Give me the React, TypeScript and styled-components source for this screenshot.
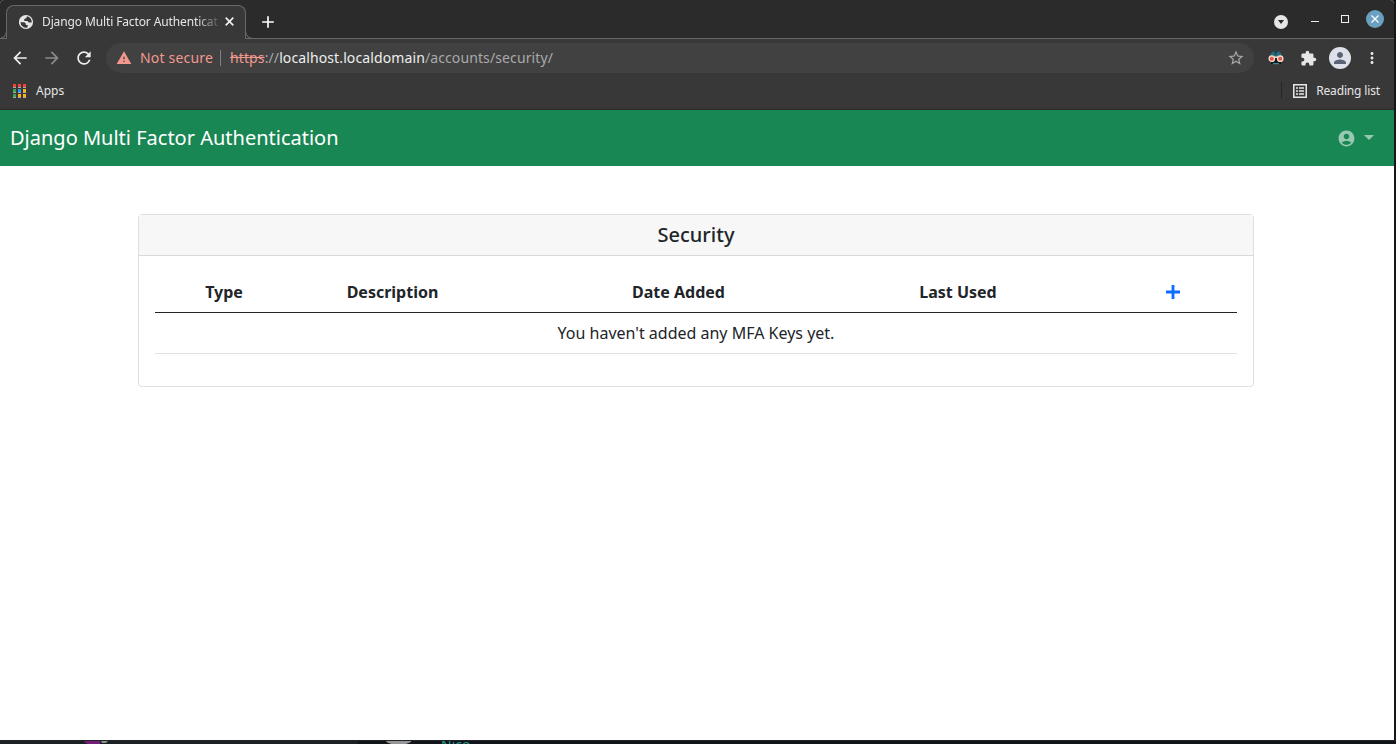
import React from "react";
import styled, { createGlobalStyle } from "styled-components";
import {
  MdArrowBack, MdArrowForward, MdRefresh, MdWarning, MdStarBorder, MdExtension,
  MdPerson, MdMoreVert, MdAccountCircle, MdAdd,
} from "react-icons/md";

const GlobalStyle = createGlobalStyle`
  *, *::before, *::after { box-sizing: border-box; }
  body { margin: 0; background: #0f1216; font-family: "Noto Sans", sans-serif; overflow: hidden; }
  svg { display: block; flex: none; }
`;

const Desktop = styled.div`
  width: 1396px;
  height: 744px;
  display: flex;
  flex-direction: column;
  background: #15181a;
  overflow: hidden;
`;

const Window = styled.div`
  width: 1394px;
  height: 740px;
  flex: none;
  display: flex;
  flex-direction: column;
  background: #fff;
  overflow: hidden;
  border-radius: 4px 4px 0 0;
`;

const TitleBar = styled.div`
  height: 39px;
  flex: none;
  display: flex;
  align-items: flex-end;
  background: #2b2b2b;
  border-bottom: 1px solid #686868;
`;

const Tab = styled.div`
  position: relative;
  width: 240px;
  height: 34px;
  margin: 0 0 -1px 6px;
  padding: 0 11px 2px 12px;
  display: flex;
  align-items: center;
  background: #383838;
  border: 1px solid #686868;
  border-bottom: 0;
  border-radius: 8px 8px 0 0;
  color: #e6e6e6;

  &::before, &::after {
    content: "";
    position: absolute;
    bottom: 0;
    width: 8px;
    height: 8px;
    border-bottom: 1px solid #686868;
  }
  &::before {
    left: -8px;
    border-right: 1px solid #686868;
    border-bottom-right-radius: 8px;
  }
  &::after {
    right: -8px;
    border-left: 1px solid #686868;
    border-bottom-left-radius: 8px;
  }
`;

const TabTitle = styled.div`
  flex: 1;
  margin: 0 7px 0 8px;
  font-size: 12px;
  line-height: 20px;
  letter-spacing: -0.12px;
  white-space: nowrap;
  overflow: hidden;
  mask-image: linear-gradient(to right, #000 154px, transparent 180px);
`;

const NewTab = styled.div`
  margin: 0 auto 6px 12px;
  color: #fff;
`;

const WindowButtons = styled.div`
  display: flex;
  align-items: center;
  height: 38px;
  padding-right: 10px;
`;

const TabSearch = styled.div`
  width: 14px;
  height: 14px;
  margin: 5px 23px 0 0;
  display: grid;
  place-items: center;
  border-radius: 50%;
  background: #e6e6e6;
`;

const Minimize = styled.div`
  width: 8px;
  height: 1px;
  margin: 5px 22px 0 0;
  background: #eee;
`;

const Maximize = styled.div`
  width: 8px;
  height: 8px;
  margin-right: 17px;
  border: 1px solid #eee;
`;

const CloseWindow = styled.div`
  width: 18px;
  height: 18px;
  display: grid;
  place-items: center;
  border-radius: 50%;
  background: #6aa0c0;
`;

const Toolbar = styled.div`
  height: 38px;
  flex: none;
  display: flex;
  align-items: center;
  padding: 0 13px 0 10px;
  background: #383838;
`;

const NavButtons = styled.div`
  display: flex;
  gap: 12px;
  color: #eee;
`;

const AddressBar = styled.div`
  width: 1148px;
  height: 30px;
  margin-left: 12px;
  padding: 0 9px 0 10px;
  display: flex;
  align-items: center;
  border-radius: 15px;
  background: #414141;
  font-size: 14px;
  line-height: 20px;
  color: #a9a9a9;
`;

const NotSecure = styled.span`
  margin-left: 8px;
  letter-spacing: 0.18px;
  color: #f2988f;
`;

const AddressDivider = styled.span`
  width: 1px;
  height: 16px;
  margin: 0 9px 0 7px;
  background: #808080;
`;

const Url = styled.span`
  flex: 1;
  letter-spacing: 0.11px;
  s { color: #f2988f; }
  b { font-weight: 400; color: #eee; }
`;

const Extensions = styled.div`
  display: flex;
  align-items: center;
  margin-left: auto;
  color: #e6e6e6;
`;

const ExtensionSlot = styled.div`
  margin-right: 16px;
`;

const Avatar = styled.div`
  width: 22px;
  height: 22px;
  margin: 0 12px;
  display: grid;
  place-items: center;
  border-radius: 50%;
  background: #dee1e9;
  color: #5b6378;
`;

const Bookmarks = styled.div`
  height: 33px;
  flex: none;
  display: flex;
  align-items: center;
  padding: 0 14px 5px 13px;
  background: #383838;
  border-bottom: 1px solid #2b2b2b;
  color: #e6e6e6;
  font-size: 12px;
`;

const AppsGrid = styled.div`
  display: grid;
  grid-template-columns: repeat(3, 3px);
  grid-auto-rows: 4px;
  gap: 1px 2px;
  margin-right: 10px;
`;

const AppDot = styled.i<{ $color: string }>`
  background: ${(p) => p.$color};
  border-bottom: 1px solid #aaa;
`;

const ReadingList = styled.div`
  display: flex;
  align-items: center;
  gap: 9px;
  height: 17px;
  margin-left: auto;
  padding-left: 11px;
  border-left: 1px solid #262626;
  letter-spacing: -0.15px;
`;

const Navbar = styled.header`
  height: 56px;
  flex: none;
  display: flex;
  align-items: center;
  justify-content: space-between;
  padding: 0 20px 0 10px;
  background: #198754;
`;

const Brand = styled.div`
  font-size: 20px;
  line-height: 30px;
  color: #fff;
`;

const UserMenu = styled.div`
  display: flex;
  align-items: center;
  gap: 8px;
  color: rgba(255, 255, 255, 0.55);
`;

const Caret = styled.span`
  border: 5px solid transparent;
  border-top: 5px solid currentColor;
  border-bottom: 0;
  margin-top: -1px;
`;

const Card = styled.section`
  width: 1116px;
  margin: 48px 0 0 138px;
  border: 1px solid #dfdfdf;
  border-radius: 4px;
  color: #212529;
`;

const CardHeader = styled.h5`
  height: 41px;
  margin: 0;
  padding-top: 8px;
  border-bottom: 1px solid #d8d8d8;
  background: #f7f7f7;
  text-align: center;
  font-size: 20px;
  font-weight: 500;
  line-height: 24px;
`;

const CardBody = styled.div`
  padding: 16px 16px 32px;
`;

const KeyTable = styled.table`
  width: 100%;
  table-layout: fixed;
  border-collapse: separate;
  border-spacing: 0;
  font-size: 16px;
  line-height: 24px;
  text-align: center;
`;

const HeadCell = styled.th<{ $width?: number }>`
  width: ${(p) => (p.$width ? `${p.$width}px` : "auto")};
  padding: 8px 0;
  border-bottom: 1px solid #212529;
`;

const AddCell = styled(HeadCell)`
  padding-left: 57px;
  color: #0d6efd;
  svg { margin: 0 auto; }
`;

const EmptyCell = styled.td`
  padding: 8px;
  border-bottom: 1px solid #dee2e6;
`;

const Backdrop = styled.div`
  height: 4px;
  flex: none;
  display: flex;
  background: #11151a;
  border-top: 1px solid #202427;
  overflow: hidden;
`;

const BackdropPanel = styled.div`
  width: 358px;
  height: 4px;
  padding-left: 84px;
  background: #1b2024;
`;

const BackdropName = styled.span`
  margin-left: 29px;
  margin-top: -4px;
  font-size: 14px;
  line-height: 16px;
  color: #269b91;
`;

const appColors = ["#f44336", "#f44336", "#f44336", "#34a853", "#2196f3", "#fbb117", "#34a853", "#fbb117", "#fbb117"];

export default function App() {
  return (
    <Desktop>
      <GlobalStyle />
      <Window>
        <TitleBar>
          <Tab>
            <svg width="15" height="16" viewBox="0 0 15 16">
              <circle cx="7" cy="8" r="7.1" fill="#e6e6e6" />
              <path d="M8 2.3l-.8 1.9-2 .8.2 2h3l1.5 1.5 2.8.1A5.7 5.7 0 0 0 8 2.3z" fill="#383838" />
              <path d="M1.4 8.2h3.9l1.5 1.4v1.5h2l-.4 2.4a5.8 5.8 0 0 1-7-5.3z" fill="#383838" />
            </svg>
            <TabTitle>Django Multi Factor Authentication</TabTitle>
            <svg width="9" height="9" viewBox="0 0 9 9"><path d="M.7.7l7.6 7.6m0-7.6L.7 8.3" stroke="#eee" strokeWidth="1.7" /></svg>
          </Tab>
          <NewTab><MdAdd size={20} /></NewTab>
          <WindowButtons>
            <TabSearch>
              <svg width="8" height="6" viewBox="0 0 8 6"><path d="M1 1h6L4 5z" fill="#2b2b2b" /></svg>
            </TabSearch>
            <Minimize />
            <Maximize />
            <CloseWindow>
              <svg width="8" height="8" viewBox="0 0 8 8"><path d="M.5.5l7 7m0-7l-7 7" stroke="#fff" strokeWidth="1.3" /></svg>
            </CloseWindow>
          </WindowButtons>
        </TitleBar>
        <Toolbar>
          <NavButtons>
            <MdArrowBack size={20} />
            <MdArrowForward size={20} color="#8b8b8b" />
            <MdRefresh size={20} />
          </NavButtons>
          <AddressBar>
            <MdWarning size={16} color="#f2988f" />
            <NotSecure>Not secure</NotSecure>
            <AddressDivider />
            <Url><s>https</s>://<b>localhost.localdomain</b>/accounts/security/</Url>
            <MdStarBorder size={18} />
          </AddressBar>
          <Extensions>
            <ExtensionSlot>
              <svg width="16" height="16" viewBox="0 0 16 16">
                <path d="M2 7Q2 1 8 1t6 6z" fill="#286c7c" />
                <path d="M6.5 1.2h3.5L7 5z" fill="#173e4b" />
                <path d="M3 8h10v6H3z" fill="#151819" />
                <path d="M5 13h6v1.3H5z" fill="#3b8795" />
                <circle cx="3.8" cy="8.7" r="2.7" fill="#d75c4b" stroke="#f5d7ca" strokeWidth="1.3" />
                <circle cx="12.2" cy="8.7" r="2.7" fill="#d75c4b" stroke="#f5d7ca" strokeWidth="1.3" />
                <path d="M6 7.2h4" stroke="#f5d7ca" strokeWidth="1.4" />
              </svg>
            </ExtensionSlot>
            <MdExtension size={17} />
            <Avatar><MdPerson size={18} /></Avatar>
            <MdMoreVert size={18} />
          </Extensions>
        </Toolbar>
        <Bookmarks>
          <AppsGrid>{appColors.map((c, i) => <AppDot key={i} $color={c} />)}</AppsGrid>
          Apps
          <ReadingList>
            <svg width="14" height="14" viewBox="0 0 14 14" fill="none" stroke="#e6e6e6">
              <path d="M.75.75h12.5v12.5H.75z" strokeWidth="1.5" />
              <path d="M3 4h2m1 0h5M3 7h2m1 0h5M3 10h2m1 0h5" strokeWidth="1.5" />
            </svg>
            Reading list
          </ReadingList>
        </Bookmarks>
        <Navbar>
          <Brand>Django Multi Factor Authentication</Brand>
          <UserMenu>
            <MdAccountCircle size={19} />
            <Caret />
          </UserMenu>
        </Navbar>
        <Card>
          <CardHeader>Security</CardHeader>
          <CardBody>
            <KeyTable>
              <thead>
                <tr>
                  <HeadCell $width={138}>Type</HeadCell>
                  <HeadCell $width={199}>Description</HeadCell>
                  <HeadCell $width={373}>Date Added</HeadCell>
                  <HeadCell $width={186}>Last Used</HeadCell>
                  <AddCell>
                    <svg width="14" height="14" viewBox="0 0 14 14"><path d="M7 0v14M0 7h14" stroke="currentColor" strokeWidth="2.8" /></svg>
                  </AddCell>
                </tr>
              </thead>
              <tbody>
                <tr><EmptyCell colSpan={5}>You haven't added any MFA Keys yet.</EmptyCell></tr>
              </tbody>
            </KeyTable>
          </CardBody>
        </Card>
      </Window>
      <Backdrop>
        <BackdropPanel>
          <svg width="24" height="3" viewBox="0 0 24 3">
            <path d="M0 0h16v3H4Q1 2 0 0z" fill="#751b78" />
            <path d="M17 0h7l-2 2h-4z" fill="#8b9292" />
          </svg>
        </BackdropPanel>
        <svg width="54" height="3" viewBox="0 0 54 3">
          <path d="M28 0h25v1l-5 2H34q-5-1-6-3z" fill="#969696" />
        </svg>
        <BackdropName>Nico</BackdropName>
      </Backdrop>
    </Desktop>
  );
}
